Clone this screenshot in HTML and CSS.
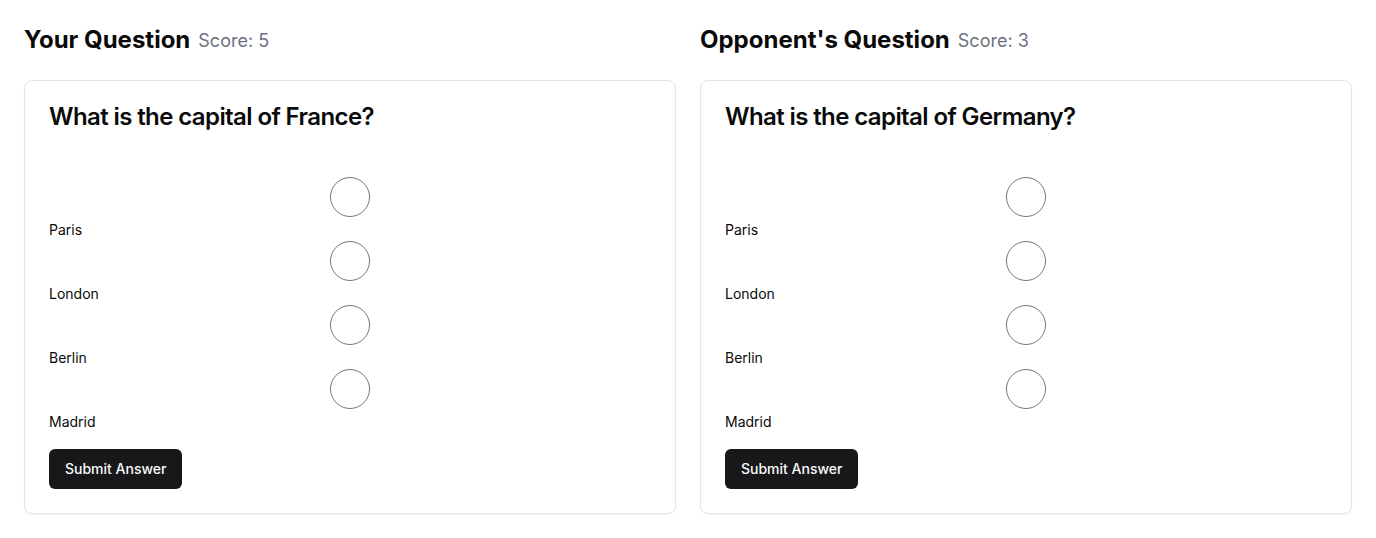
FILE: index.html
```html
<!DOCTYPE html>
<html lang="en">
<head>
<meta charset="utf-8">
<title>Quiz Duel</title>
<link rel="stylesheet" href="styles.css">
</head>
<body>
<main class="page">
  <section class="column">
    <div class="col-head">
      <h2 class="col-title">Your Question</h2>
      <span class="score">Score: 5</span>
    </div>
    <div class="card">
      <div class="card-header">
        <h3 class="card-title">What is the capital of France?</h3>
      </div>
      <form class="card-content">
        <div class="options">
          <div class="option"><input class="radio" type="radio" name="q1" id="q1a"><label class="opt-label" for="q1a">Paris</label></div>
          <div class="option"><input class="radio" type="radio" name="q1" id="q1b"><label class="opt-label" for="q1b">London</label></div>
          <div class="option"><input class="radio" type="radio" name="q1" id="q1c"><label class="opt-label" for="q1c">Berlin</label></div>
          <div class="option"><input class="radio" type="radio" name="q1" id="q1d"><label class="opt-label" for="q1d">Madrid</label></div>
        </div>
        <button class="btn" type="button">Submit Answer</button>
      </form>
    </div>
  </section>
  <section class="column">
    <div class="col-head">
      <h2 class="col-title">Opponent's Question</h2>
      <span class="score">Score: 3</span>
    </div>
    <div class="card">
      <div class="card-header">
        <h3 class="card-title">What is the capital of Germany?</h3>
      </div>
      <form class="card-content">
        <div class="options">
          <div class="option"><input class="radio" type="radio" name="q2" id="q2a"><label class="opt-label" for="q2a">Paris</label></div>
          <div class="option"><input class="radio" type="radio" name="q2" id="q2b"><label class="opt-label" for="q2b">London</label></div>
          <div class="option"><input class="radio" type="radio" name="q2" id="q2c"><label class="opt-label" for="q2c">Berlin</label></div>
          <div class="option"><input class="radio" type="radio" name="q2" id="q2d"><label class="opt-label" for="q2d">Madrid</label></div>
        </div>
        <button class="btn" type="button">Submit Answer</button>
      </form>
    </div>
  </section>
</main>
</body>
</html>
```
FILE: styles.css
```css
* { box-sizing: border-box; }
html, body { margin: 0; padding: 0; background: #ffffff; }
body {
  font-family: Inter, "Noto Sans", "Liberation Sans", sans-serif;
  color: #0a0a0a;
}
.page {
  display: grid;
  grid-template-columns: 1fr 1fr;
  gap: 24px;
  padding: 24px 24px 24px;
}
.col-head {
  display: flex;
  align-items: baseline;
  gap: 8px;
  margin-bottom: 24px;
}
.col-title {
  margin: 0;
  font-size: 24px;
  line-height: 32px;
  font-weight: 700;
  color: #0a0a0a;
}
.score {
  font-size: 18px;
  line-height: 28px;
  color: #6b7280;
  font-weight: 400;
  position: relative;
  top: -1px;
}
.card {
  border: 1px solid #e4e4e7;
  border-radius: 8px;
  background: #fff;
  box-shadow: 0 1px 2px rgba(0,0,0,0.04);
}
.card-header { padding: 24px; }
.card-title {
  margin: 0;
  font-size: 24px;
  line-height: 24px;
  font-weight: 600;
  letter-spacing: -0.025em;
}
.card-content {
  padding: 0 24px 24px;
  margin: 0;
}
.options {
  display: flex;
  flex-direction: column;
  gap: 4px;
  padding-top: 24px;
  margin-bottom: 20px;
}
.option {
  display: flex;
  flex-direction: column;
  gap: 6px;
}
.radio {
  appearance: none;
  -webkit-appearance: none;
  display: block;
  width: 40px;
  height: 40px;
  margin: 0 auto;
  border: 1px solid #767676;
  border-radius: 50%;
  background: #fff;
}
.opt-label {
  font-size: 14px;
  line-height: 14px;
  font-weight: 400;
  color: #0a0a0a;
}
.btn {
  display: inline-flex;
  align-items: center;
  height: 40px;
  padding: 0 16px 1px;
  border: 0;
  border-radius: 6px;
  background: #18181b;
  color: #fafafa;
  font-family: inherit;
  font-size: 14px;
  font-weight: 500;
  line-height: 20px;
}
```
